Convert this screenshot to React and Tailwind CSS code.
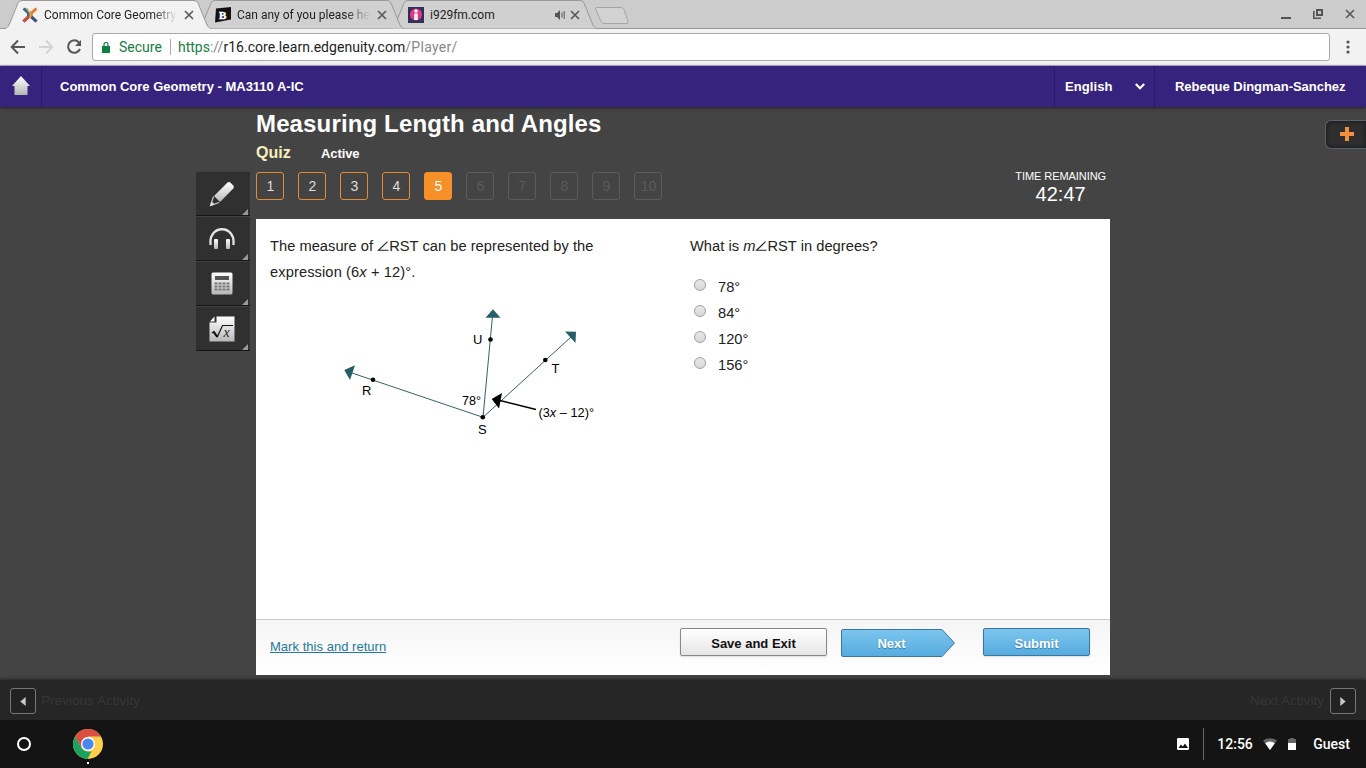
const questions = [1, 2, 3, 4, 5, 6, 7, 8, 9, 10]
const current = 5
const answers = ["78°", "84°", "120°", "156°"]

function CloseIcon({ className }) {
  return (
    <svg viewBox="0 0 10 10" className={className} stroke="#5a5a5a" strokeWidth="1.7" fill="none">
      <path d="M1 1l8 8M9 1l-8 8" />
    </svg>
  )
}

function TabShape({ active }) {
  return (
    <svg viewBox="0 0 206 29" className="absolute inset-0 h-[29px] w-[206px]">
      <path
        d="M0 28.5C2 28 3 27 4 25L13 3Q14 .5 17 .5H189Q192 .5 193 3L202 25C203 27 204 28 206 28.5"
        fill={active ? "#f2f2f2" : "#d0d0d0"}
        stroke="#999"
      />
      {active && <path d="M1 28.5h204" stroke="#f2f2f2" />}
    </svg>
  )
}

function Tab({ title, active, muted, children, className }) {
  return (
    <div className={`relative -mr-[13px] h-[29px] w-[206px] shrink-0 ${className}`}>
      <TabShape active={active} />
      <div className="relative flex h-[29px] items-center pl-[17px]">
        <span className="flex w-[16px] shrink-0">{children}</span>
        <span
          className={`ml-[6px] whitespace-nowrap text-[12px] text-[#222] ${
            muted
              ? "w-[125px]"
              : "w-[133px] [mask-image:linear-gradient(to_right,#000_82%,transparent)]"
          }`}
        >
          {title}
        </span>
        {muted && (
          <svg viewBox="0 0 10 10" className="mr-[5px] h-[10px] w-[10px]" fill="#555" stroke="#555">
            <path d="M0 3h2l3-3v10l-3-3H0z" stroke="none" />
            <path d="M7 2.5v5M9.2 1v8" fill="none" strokeWidth="1" />
          </svg>
        )}
        <CloseIcon className={muted ? "h-[10px] w-[10px]" : "ml-[7px] h-[10px] w-[10px]"} />
      </div>
    </div>
  )
}

function BrowserTabs() {
  return (
    <div className="flex h-[29px] border-b border-[#999] bg-[#ccc] pl-[5px]">
      <Tab title="Common Core Geometry" active className="z-20">
        <svg viewBox="0 0 16 16" className="h-4 w-4" fill="none" strokeWidth="3">
          <path d="M1.500 1.500L6 5.500Q7.500 8 6 10.500L1.500 14.500" stroke="#2b6c8f" />
          <path d="M14.500 1.500L10 5.500Q8 8 10 10.500L14.500 14.500" stroke="#ee7a30" />
          <path d="M6.500 9.500L1.500 14.500" stroke="#d84a33" />
          <path d="M9.500 9.800L14.500 14.500" stroke="#2c5b88" />
          <path d="M4.500 .8L7 5" stroke="#f09a3c" strokeWidth="1.500" />
          <path d="M8.300 4.500v7" stroke="#e8a045" strokeWidth="1.500" />
        </svg>
      </Tab>
      <Tab title="Can any of you please he" className="z-10">
        <svg viewBox="0 0 16 16" className="h-4 w-4">
          <path d="M1 1.500L16 0v12.500L0 15.500z" fill="#111" />
          <text
            x="4"
            y="12"
            fill="#fff"
            stroke="#fff"
            strokeWidth=".5"
            fontSize="11"
            fontWeight="900"
            fontFamily="Liberation Serif, serif"
          >
            B
          </text>
        </svg>
      </Tab>
      <Tab title="i929fm.com" muted className="z-0">
        <svg viewBox="0 0 16 16" className="h-4 w-4">
          <rect width="16" height="16" fill="#322f5b" />
          <circle cx="8" cy="7.500" r="6" fill="#e03a87" />
          <circle cx="8" cy="4" r="1.700" fill="#fff" />
          <path d="M6.300 6.500h3.400V13H6.300z" fill="#fff" />
        </svg>
      </Tab>
      <svg viewBox="0 0 36 18" className="mt-[6px] ml-[10px] h-[18px] w-[36px]">
        <path d="M2 1.500h25q2 0 3 2l4 12q.5 2-1 2H10q-2 0-3-2L1.500 3Q1 1.500 2 1.500z" fill="#d2d2d2" stroke="#a6a6a6" />
      </svg>
      <div className="mr-[11px] ml-auto flex items-center gap-[22px]">
        <svg viewBox="0 0 10 10" className="h-[10px] w-[10px]">
          <path d="M0 8h10v2H0z" fill="#555" />
        </svg>
        <svg viewBox="0 0 10 10" className="h-[10px] w-[10px]" fill="none" stroke="#555">
          <path d="M4 1h5v5H4z" strokeWidth="2" />
          <path d="M.8 2v7.200H8" strokeWidth="1.600" />
        </svg>
        <CloseIcon className="h-[10px] w-[10px]" />
      </div>
    </div>
  )
}

function AddressBar() {
  return (
    <div className="flex h-[37px] items-center border-b border-[#bbb5d8] bg-[#f2f2f2]">
      <svg viewBox="0 0 16 16" className="ml-[10px] h-4 w-4" fill="none" stroke="#555" strokeWidth="2">
        <path d="M15 8H2M8 1.500L1.700 8L8 14.500" />
      </svg>
      <svg viewBox="0 0 16 16" className="ml-[12px] h-4 w-4" fill="none" stroke="#d4d4d4" strokeWidth="2">
        <path d="M1 8h13M8 1.500L14.300 8L8 14.500" />
      </svg>
      <svg viewBox="0 0 16 16" className="ml-[12px] h-4 w-4" fill="none" stroke="#555" strokeWidth="2">
        <path d="M13 3.500A6.200 6.200 0 1 0 14 10" />
        <path d="M15 1v6H9z" fill="#555" stroke="none" />
      </svg>
      <div className="ml-[10px] flex h-[28px] w-[1238px] items-center rounded-[3px] border border-[#aaa] bg-white text-[14px]">
        <svg viewBox="0 0 8 11" className="ml-[9px] h-[11px] w-[8px]">
          <path d="M0 4h8v7H0z" fill="#0b8043" />
          <path d="M2 4V2.500a2 2 0 0 1 4 0V4" fill="none" stroke="#0b8043" strokeWidth="1.200" />
        </svg>
        <span className="ml-[9px] w-[43px] whitespace-nowrap text-[#16803f]">Secure</span>
        <span className="mr-[7px] ml-[8px] h-4 w-px bg-[#aaa]" />
        <span className="whitespace-nowrap text-[#888]">
          <span className="text-[#16803f]">https</span>://
          <span className="tracking-[0.03px] text-[#222]">r16.core.learn.edgenuity.com</span>
          <span className="tracking-[0.3px]">/Player/</span>
        </span>
      </div>
      <svg viewBox="0 0 4 14" className="ml-[16px] h-[14px] w-[4px]" fill="#555">
        <circle cx="2" cy="2" r="1.600" />
        <circle cx="2" cy="7" r="1.600" />
        <circle cx="2" cy="12" r="1.600" />
      </svg>
    </div>
  )
}

function CourseHeader() {
  return (
    <header className="relative z-10 flex h-[41px] items-center bg-[#36237e] text-[13px] font-bold text-white shadow-[0_1px_3px_#222]">
      <div className="flex h-full w-[42px] items-center justify-center border-r border-[#281a66]">
        <svg viewBox="0 0 18 19" className="mb-[2px] h-[19px] w-[18px]">
          <defs>
            <linearGradient id="home" x2="0" y2="1">
              <stop stopColor="#fff" />
              <stop offset="1" stopColor="#b5b5b5" />
            </linearGradient>
          </defs>
          <path d="M9 0l9 10h-2.500v9h-13v-9H0z" fill="url(#home)" />
        </svg>
      </div>
      <span className="ml-[18px]">Common Core Geometry - MA3110 A-IC</span>
      <div className="ml-auto flex h-full w-[100px] items-center border-l border-[#281a66] pl-[10px]">
        <span className="tracking-[0.1px]">English</span>
        <svg viewBox="0 0 10 7" className="ml-[22px] h-[7px] w-[10px]" fill="none" stroke="#fff" strokeWidth="2.200">
          <path d="M.8 1L5 5.200L9.200 1" />
        </svg>
      </div>
      <div className="flex h-full w-[212px] items-center border-l border-[#281a66] pl-[20px] tracking-[-0.03px]">
        Rebeque Dingman-Sanchez
      </div>
    </header>
  )
}

function Tool({ children }) {
  return (
    <div className="relative flex h-[45px] w-[54px] items-center justify-center border-t border-b border-t-[#404040] border-b-[#151515] bg-[#303030] pr-[2px]">
      {children}
      <svg viewBox="0 0 6 6" className="absolute right-[2px] bottom-0 h-[6px] w-[6px]">
        <path d="M6 0v6H0z" fill="#999" />
      </svg>
    </div>
  )
}

function Tools() {
  return (
    <div className="mt-[64px] mr-[6px] w-[54px] shrink-0">
      <Tool>
        <svg viewBox="0 0 26 26" className="h-[26px] w-[26px]">
          <defs>
            <linearGradient id="metal" x2="0" y2="1">
              <stop stopColor="#fff" />
              <stop offset="1" stopColor="#b8b8b8" />
            </linearGradient>
          </defs>
          <path d="M18.500 1.500q1.500-1 2.800 0l3 3q1.200 1.500 0 3L11 21l-6-6z" fill="url(#metal)" />
          <path d="M4.500 15.500L1.500 24.500l8.500-3" fill="#303030" stroke="#ccc" strokeWidth="1.200" />
          <path d="M1 25l1.500-4.500L6 23.500z" fill="#ddd" />
        </svg>
      </Tool>
      <Tool>
        <svg viewBox="0 0 26 22" className="h-[22px] w-[26px]">
          <path d="M1.700 17C-1.500-4 27.500-4 24.300 17" fill="none" stroke="#e3e3e3" strokeWidth="2.300" />
          <rect x="5" y="11" width="4" height="10" rx="1" fill="url(#metal)" />
          <rect x="17" y="11" width="4" height="10" rx="1" fill="url(#metal)" />
        </svg>
      </Tool>
      <Tool>
        <svg viewBox="0 0 22 23" className="h-[23px] w-[22px]">
          <rect x=".5" y=".5" width="21" height="22" rx="1.500" fill="url(#metal)" />
          <rect x="4" y="4" width="14" height="4" fill="#555" />
          {[10.5, 13.5, 16.5].map((y) =>
            [3.5, 7.5, 11.5, 15.5].map((x) => (
              <rect key={`${x}-${y}`} x={x} y={y} width="3" height="2" fill="#777" />
            ))
          )}
        </svg>
      </Tool>
      <Tool>
        <svg viewBox="0 0 26 26" className="h-[26px] w-[26px]">
          <path d="M7.500 .5h18v25H.5V6.500h7z" fill="url(#metal)" />
          <path d="M1 5.500L5.500 .5v5z" fill="#fff" />
          <path d="M3 17l2-1.500 3.500 5 5-11H24" fill="none" stroke="#111" strokeWidth="1.200" />
          <path d="M4.500 16l3.800 4.800" stroke="#111" strokeWidth="2" />
          <text x="14.500" y="20.500" fill="#222" fontSize="14" fontStyle="italic" fontFamily="Liberation Serif, serif">
            x
          </text>
        </svg>
      </Tool>
    </div>
  )
}

function AngleDiagram() {
  return (
    <svg
      viewBox="336 300 270 140"
      className="ml-[66px] h-[140px] w-[270px]"
      fontSize="13"
      fontFamily="Liberation Sans, sans-serif"
    >
      <path d="M352 373L483 417.300L492.500 316M483 417.300L571 337" fill="none" stroke="#386068" />
      <g fill="#285e68">
        <path d="M344.300 370L355 365.300L350 380z" />
        <path d="M493 309.300L500.500 317.700H485.500z" />
        <path d="M565 331.500L576 331.700L575.500 343z" />
      </g>
      <path d="M500 400.500L536 409.500" stroke="#000" strokeWidth="1.300" />
      <path d="M491.700 399L502 393L499 408.500z" />
      <circle cx="373" cy="379.700" r="2.300" />
      <circle cx="490.500" cy="339.500" r="2.300" />
      <circle cx="545.300" cy="360" r="2.300" />
      <circle cx="482.800" cy="417.300" r="2.300" />
      <text x="362" y="395">R</text>
      <text x="473" y="344">U</text>
      <text x="551.500" y="373">T</text>
      <text x="478" y="434">S</text>
      <text x="462" y="405" textLength="19" lengthAdjust="spacingAndGlyphs">78°</text>
      <text x="538.500" y="417" textLength="55.500" lengthAdjust="spacingAndGlyphs">
        (3<tspan fontStyle="italic">x</tspan> – 12)°
      </text>
    </svg>
  )
}

// Angle sign drawn as an inline mark so that it sits on the text baseline
function Angle() {
  return (
    <svg viewBox="0 0 12 10" className="inline-block h-[10px] w-[12px] align-baseline">
      <path d="M10.500 .7L1.500 9.300H11.500" fill="none" stroke="#222" strokeWidth="1.100" />
    </svg>
  )
}

function QuizCard() {
  return (
    <div className="mt-[19px] flex h-[456px] w-[854px] flex-col bg-white text-[#222]">
      <div className="flex h-[400px] pl-[14px] text-[14.67px] leading-[26px] tracking-[0.03px]">
        <div className="w-[420px] pt-[14px]">
          <p className="whitespace-nowrap">
            The measure of <Angle />RST can be represented by the
            <br />
            <span className="tracking-[0.1px]">expression (6<i>x</i> + 12)°.</span>
          </p>
          <div className="mt-[15px] tracking-normal">
            <AngleDiagram />
          </div>
        </div>
        <div className="pt-[14px]">
          <p>
            What is <i>m</i><Angle />RST in degrees?
          </p>
          <div className="mt-[15px]">
            {answers.map((answer) => (
              <label key={answer} className="flex h-[26px] items-center pl-[4px]">
                <span className="mb-[4px] h-[12px] w-[12px] rounded-full border border-[#a0a0a0] bg-linear-to-b from-[#e8e8e8] to-[#d8d8d8]" />
                <span className="ml-[12px]">{answer}</span>
              </label>
            ))}
          </div>
        </div>
      </div>
      <div className="flex h-[56px] border-t border-[#ccc] bg-linear-to-b from-[#f5f5f5] to-white pl-[14px] text-[13px] font-bold">
        <a className="mt-[17px] w-[410px] font-normal tracking-[0.03px] text-[#23799c] underline" href="#">
          Mark this and return
        </a>
        <button className="mt-[8px] h-[28px] w-[147px] rounded-[2px] border border-[#888] bg-linear-to-b from-white to-[#e5e5e5] pt-[3px] text-[#111] shadow-[0_1px_2px_#ddd]">
          Save and Exit
        </button>
        <button className="relative mt-[9px] ml-[14px] h-[28px] w-[114px] pt-px pr-[13px] text-white">
          <svg viewBox="0 0 114 28" className="absolute inset-0 h-[28px] w-[114px]">
            <defs>
              <linearGradient id="next" x2="0" y2="1">
                <stop stopColor="#7cc5ee" />
                <stop offset="1" stopColor="#56abdf" />
              </linearGradient>
            </defs>
            <path d="M2 .5h99L113.500 14L101 27.500H2Q.5 27.500 .5 26V2Q.5 .5 2 .5z" fill="url(#next)" stroke="#3a76a0" />
          </svg>
          <span className="relative [text-shadow:0_1px_1px_#377ba5]">Next</span>
        </button>
        <button className="mt-[8px] ml-[28px] h-[28px] w-[107px] rounded-[2px] border border-[#3a76a0] bg-linear-to-b from-[#7cc5ee] to-[#56abdf] pt-[3px] text-white shadow-[0_1px_2px_#ddd] [text-shadow:0_1px_1px_#377ba5]">
          Submit
        </button>
      </div>
    </div>
  )
}

function QuestionNav() {
  return (
    <div className="mt-[7px] flex gap-[14px]">
      {questions.map((n) => (
        <div
          key={n}
          className={`flex h-[28px] w-[28px] items-center justify-center rounded-[3px] border pl-px text-[14px] ${
            n === current
              ? "border-[#f8902a] bg-[#f8902a] text-white"
              : n < current
              ? "border-[#e58b36] text-[#ddd]"
              : "border-[#5b5b5b] text-[#5b5b5b]"
          }`}
        >
          {n}
        </div>
      ))}
    </div>
  )
}

function Lesson() {
  return (
    <main className="flex h-[573px] bg-[#444] pl-[196px]">
      <Tools />
      <div className="w-[854px] shrink-0">
        <div className="flex h-[93px] justify-between">
          <div>
            <h1 className="h-[34px] text-[24px] leading-[34px] font-bold tracking-[0.14px] text-white">
              Measuring Length and Angles
            </h1>
            <div className="flex h-[24px] items-center font-bold">
              <span className="w-[65px] text-[16px] text-[#f8eebc]">Quiz</span>
              <span className="pt-px text-[13px] tracking-[-0.1px] text-white">Active</span>
            </div>
            <QuestionNav />
          </div>
          <div className="mr-[4px] pt-[61px] text-center text-white">
            <div className="text-[11px] leading-[16px] tracking-[-0.07px]">TIME REMAINING</div>
            <div className="text-[20px] leading-[20px]">42:47</div>
          </div>
        </div>
        <QuizCard />
      </div>
      <div className="mt-[13px] ml-auto flex h-[29px] w-[41px] items-center justify-center rounded-l-[6px] border border-r-0 border-[#58616c] bg-[#2e2e2e] pb-[2px] pl-px shadow-[inset_0_0_4px_#161616]">
        <svg viewBox="0 0 14 14" className="h-[14px] w-[14px]">
          <path d="M5 0h4v5h5v4H9v5H5V9H0V5h5z" fill="#f3903f" />
        </svg>
      </div>
    </main>
  )
}

function ArrowButton({ flip }) {
  return (
    <button className="flex h-[26px] w-[26px] items-center justify-center rounded-[3px] border border-[#777] bg-[#222]">
      <svg viewBox="0 0 6 10" className={`h-[9px] w-[6px] ${flip ? "rotate-180" : ""}`}>
        <path d="M6 0v10L0 5z" fill="#c8c8c8" />
      </svg>
    </button>
  )
}

function ActivityBar() {
  return (
    <div className="relative flex h-[40px] items-center bg-[#262626] px-[10px] pt-[2px] text-[13.600px] text-[#363636] shadow-[0_-1px_3px_#262626]">
      <ArrowButton />
      <span className="ml-[5px]">Previous Activity</span>
      <span className="mr-[6px] ml-auto">Next Activity</span>
      <ArrowButton flip />
    </div>
  )
}

function Shelf() {
  return (
    <div className="relative flex h-[48px] items-center bg-[#141414] font-['Roboto',sans-serif] text-[14px] font-medium text-white">
      <span className="ml-[17px] h-[14px] w-[14px] rounded-full border-2 border-white" />
      <div className="relative ml-[42px]">
        <svg viewBox="0 0 30 30" className="h-[30px] w-[30px]">
          <circle cx="15" cy="15" r="15" fill="#fcd04b" />
          <path d="M2 7.500A15 15 0 0 1 28 7.500H15L8.500 18.700z" fill="#da4f44" />
          <path d="M2 7.500L8.500 18.700Q11 22.500 15 22.500h3.500L14.500 30A15 15 0 0 1 2 7.500z" fill="#1ba261" />
          <circle cx="15" cy="15" r="7" fill="#fff" />
          <circle cx="15" cy="15" r="5.600" fill="#4a87ee" />
        </svg>
        <span className="absolute -bottom-[5px] left-[14px] h-[2px] w-[2px] bg-white" />
      </div>
      <svg viewBox="0 0 12 12" className="ml-auto h-[12px] w-[12px]">
        <rect width="12" height="12" rx="1.200" fill="#fff" />
        <path d="M1.500 10l2.500-3.500 1.800 2L8 5.500l3 4.500z" fill="#141414" />
      </svg>
      <span className="ml-[14px] h-[32px] w-px bg-[#666]" />
      <span className="ml-[13px] w-[37px]">12:56</span>
      <svg viewBox="0 0 14 12" className="ml-[9px] h-[12px] w-[14px]">
        <path d="M0 2.500Q7-2.200 14 2.500L7 12z" fill="#666" />
        <path d="M2.200 5.200Q7 2 11.800 5.200L7 12z" fill="#fff" />
      </svg>
      <svg viewBox="0 0 8 12" className="ml-[11px] h-[12px] w-[8px]">
        <path d="M0 1h2V0h4v1h2v4H0z" fill="#666" />
        <path d="M0 5h8v7H0z" fill="#fff" />
      </svg>
      <span className="mr-[16px] ml-[17px]">Guest</span>
    </div>
  )
}

export default function App() {
  return (
    <div className="h-[768px] w-[1366px] overflow-hidden bg-[#444] font-['Liberation_Sans',sans-serif]">
      <div className="font-['Roboto',sans-serif]">
        <BrowserTabs />
        <AddressBar />
      </div>
      <CourseHeader />
      <Lesson />
      <ActivityBar />
      <Shelf />
    </div>
  )
}
